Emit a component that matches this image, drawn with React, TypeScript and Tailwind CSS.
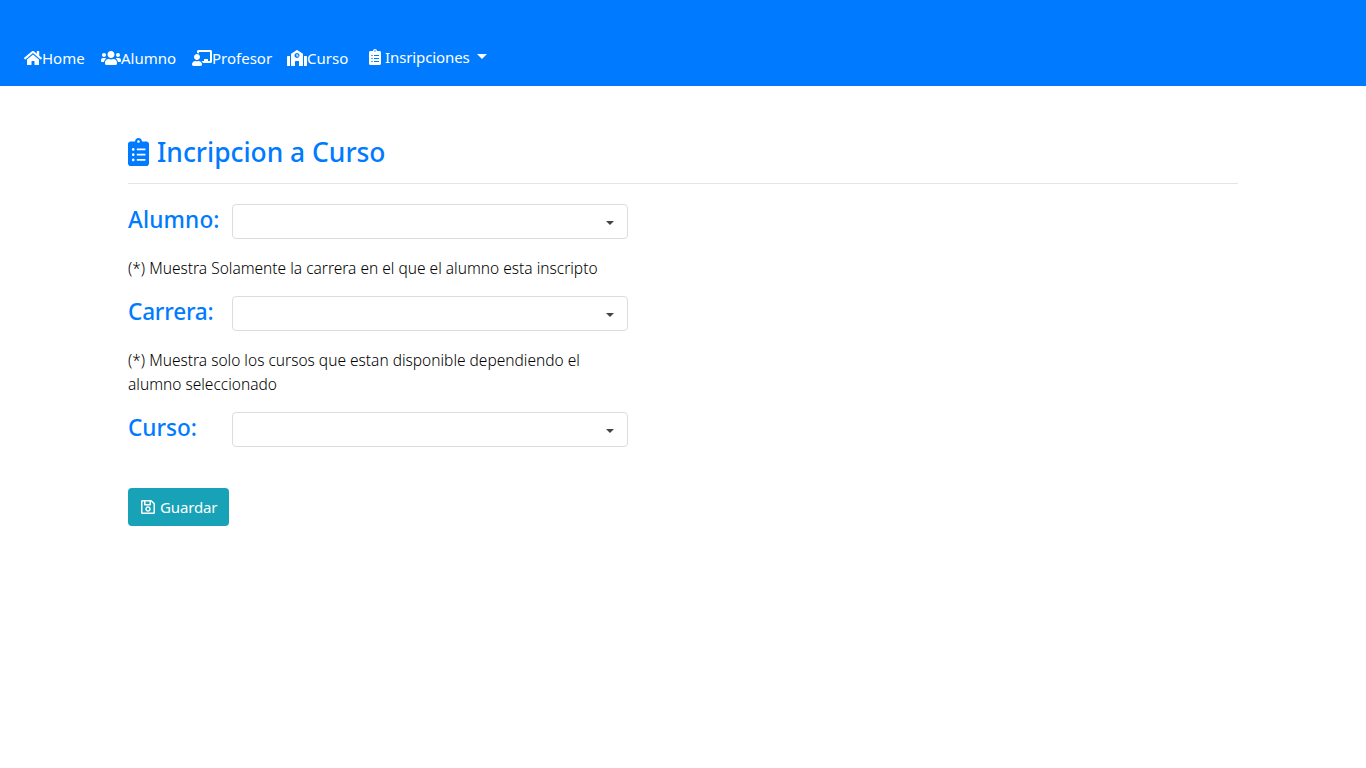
import { FaHome, FaUsers, FaChalkboardTeacher, FaSchool, FaClipboardList, FaRegSave } from "react-icons/fa";

function Field({ label, tracking }: { label: string; tracking: string }) {
  return (
    <div className="flex h-[35px]">
      <h2 className="w-[104px] text-[22.6px] leading-8 font-medium whitespace-nowrap text-[#007bff]">
        <span className={tracking}>{label}</span>
      </h2>
      <button className="flex h-[35px] w-[396px] items-center justify-end rounded-[4px] border border-[#dddddd] pt-[3px] pr-[13px]">
        <svg width="8" height="4" viewBox="0 0 8 4" fill="#444444"><path d="M0 0h8L4 4z" /></svg>
      </button>
    </div>
  );
}

export default function App() {
  return (
    <div className="min-h-screen bg-white font-['Noto_Sans',sans-serif] text-[15px] leading-6 text-[#212529]">
      <nav className="flex h-[86px] gap-4 bg-[#007bff] pt-[46px] pl-6 whitespace-nowrap text-white">
        <a className="flex w-[61px]"><FaHome className="mt-1 h-4 w-[18px] shrink-0" /><span>Home</span></a>
        <a className="flex w-[75px]"><FaUsers className="mt-1 h-4 w-5 shrink-0" /><span>Alumno</span></a>
        <a className="flex w-[79px]"><FaChalkboardTeacher className="mt-1 h-4 w-5 shrink-0" /><span>Profesor</span></a>
        <a className="flex w-[61px]"><FaSchool className="mt-1 h-4 w-5 shrink-0" /><span>Curso</span></a>
        <a className="-mt-px ml-[5px] flex"><FaClipboardList className="mt-1 h-4 w-3 shrink-0" /><span className="ml-1 w-[84px] tracking-[-0.1px]">Insripciones</span>
          <svg className="mt-[9px] ml-[8px]" width="10" height="5" viewBox="0 0 10 5" fill="#fff"><path d="M0 0h10L5 5z" /></svg>
        </a>
      </nav>
      <main className="pt-[49px] pl-32">
        <div className="flex h-[49px] w-[1110px] border-b border-[#e5e5e5] text-[26.4px] leading-[35px] font-medium text-[#007bff]">
          <FaClipboardList className="mt-[3px] h-7 w-[21px]" />
          <h1 className="ml-2">Incripcion a Curso</h1>
        </div>
        <section className="w-[500px] pt-5">
          <Field label="Alumno:" tracking="tracking-[0.15px]" />
          <p className="mt-[17px] mb-4 h-6 text-[15.5px] leading-6 font-light text-black whitespace-nowrap">(*) Muestra Solamente la carrera en el que el alumno esta inscripto</p>
          <Field label="Carrera:" tracking="tracking-[-0.2px]" />
          <p className="mt-[17px] mb-4 text-[15.5px] leading-6 font-light text-black whitespace-nowrap">(*) Muestra solo los cursos que estan disponible dependiendo el<br />alumno seleccionado</p>
          <Field label="Curso:" tracking="tracking-normal" />
          <button className="mt-[41px] flex h-[38px] w-[101px] rounded-[4px] bg-[#17a2b8] pt-[7px] pl-[13px] text-white">
            <FaRegSave className="mt-1 h-4 w-[14px]" /><span className="ml-[5px] tracking-[-0.15px]">Guardar</span>
          </button>
        </section>
      </main>
    </div>
  );
}
